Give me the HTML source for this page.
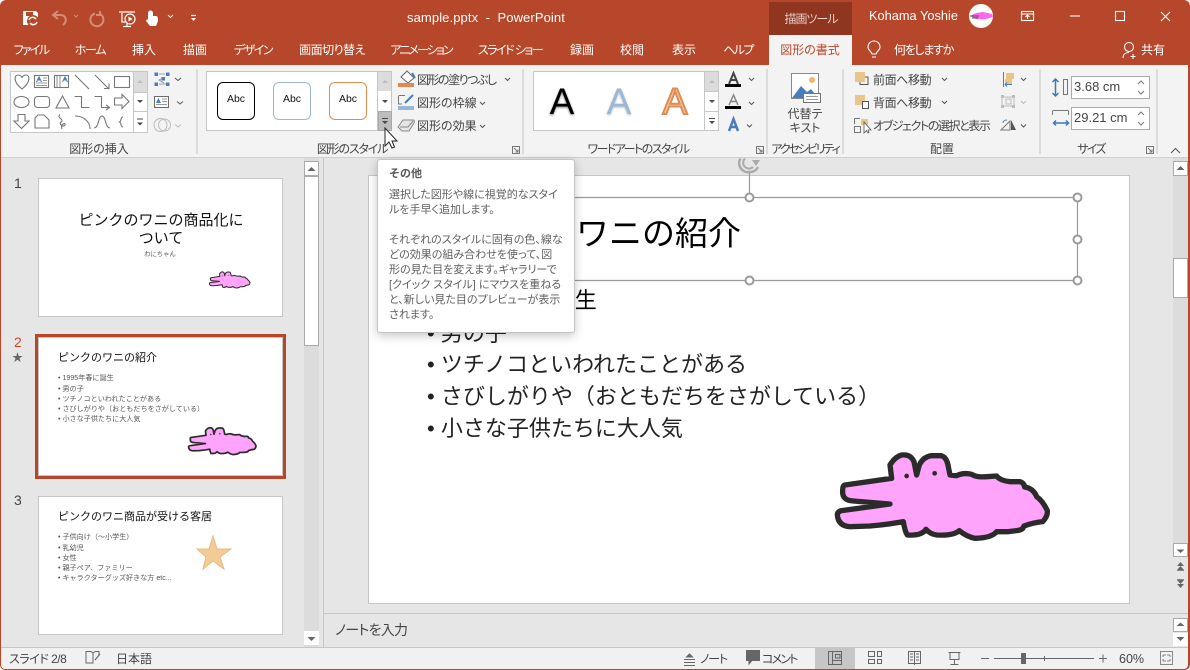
<!DOCTYPE html>
<html lang="ja"><head><meta charset="utf-8"><title>sample.pptx - PowerPoint</title>
<style>
*{box-sizing:border-box}
html,body{margin:0;padding:0;width:1190px;height:670px;overflow:hidden;background:#fff}
body{font-family:"Liberation Sans","Noto Sans CJK JP",sans-serif;position:relative}
div{position:absolute}
.t{white-space:nowrap;height:20px;line-height:20px;font-size:12px;color:#444;font-feature-settings:"palt"}
.c{transform:translateX(-50%)}
.w{color:#fff}
.s{font-feature-settings:normal;color:#000;white-space:nowrap}
svg{position:absolute;left:0;top:0}
.b{background:#fff;border:1px solid #c6c6c6}
.g{background:#dcdcdc}
.m{font-size:7.1px;line-height:10px;height:10px;color:#555;white-space:nowrap}
</style></head><body>
<div style="left:0;top:0;width:1190px;height:670px;background:#B7472A;border-radius:6px 6px 5px 5px"></div>
<div style="left:769px;top:2px;width:83px;height:33px;background:#8F3520"></div>
<div style="left:769px;top:35px;width:83px;height:30px;background:#F3F3F3"></div>
<div style="left:1px;top:65px;width:1187px;height:92px;background:#F3F3F3"></div>
<div style="left:1px;top:157px;width:1187px;height:490px;background:#E6E6E6;border-top:1px solid #d0d0d0"></div>
<div style="left:1px;top:647px;width:1187px;height:22px;background:#F1F1F1;border-top:1px solid #c6c6c6;border-radius:0 0 4px 4px"></div>

<!-- title bar text -->
<div class="t w" style="left:407px;top:8px;font-size:13px;letter-spacing:.1px">sample.pptx&nbsp; - &nbsp;PowerPoint</div>
<div class="t c" style="left:811px;top:9px;color:#e8cfc8;letter-spacing:-1px">描画ツール</div>
<div class="t w" style="left:869px;top:6px;font-size:12.8px">Kohama Yoshie</div>
<div class="t w c" style="left:31px;top:40px;letter-spacing:-1.7px">ファイル</div>
<div class="t w c" style="left:90px;top:40px;letter-spacing:-1.3px">ホーム</div>
<div class="t w c" style="left:144px;top:40px">挿入</div>
<div class="t w c" style="left:195px;top:40px">描画</div>
<div class="t w c" style="left:253px;top:40px;letter-spacing:-1.5px">デザイン</div>
<div class="t w c" style="left:332px;top:40px;letter-spacing:-.5px">画面切り替え</div>
<div class="t w c" style="left:421px;top:40px;letter-spacing:-1.9px">アニメーション</div>
<div class="t w c" style="left:510px;top:40px;letter-spacing:-1.5px">スライド ショー</div>
<div class="t w c" style="left:582px;top:40px">録画</div>
<div class="t w c" style="left:632px;top:40px">校閲</div>
<div class="t w c" style="left:684px;top:40px">表示</div>
<div class="t w c" style="left:738px;top:40px;letter-spacing:-1.7px">ヘルプ</div>
<div class="t c" style="left:810px;top:40px;color:#B7472A">図形の書式</div>
<div class="t w" style="left:894px;top:40px;letter-spacing:-1.3px">何をしますか</div>
<div class="t w" style="left:1141px;top:40px">共有</div>

<!-- ribbon boxes -->
<div class="b" style="left:10px;top:71px;width:138px;height:62px"></div>
<div class="g" style="left:134px;top:72px;width:13px;height:20px"></div>
<div style="left:133px;top:72px;width:1px;height:60px;background:#c6c6c6"></div>
<div style="left:134px;top:92px;width:13px;height:1px;background:#c6c6c6"></div>
<div style="left:134px;top:111px;width:13px;height:1px;background:#c6c6c6"></div>

<div class="b" style="left:206px;top:71px;width:186px;height:60px"></div>
<div class="g" style="left:378px;top:72px;width:13px;height:19px"></div>
<div style="left:377px;top:72px;width:1px;height:58px;background:#c6c6c6"></div>
<div style="left:378px;top:111px;width:14px;height:20px;background:#bdbdbd;border:1px solid #a8a8a8"></div>
<div style="left:217px;top:82px;width:38px;height:38px;border:1px solid #000;border-radius:6px;background:#fff"></div>
<div style="left:273px;top:82px;width:38px;height:38px;border:1px solid #9ab8d6;border-radius:6px;background:#fff"></div>
<div style="left:329px;top:82px;width:38px;height:38px;border:1px solid #e08b50;border-radius:6px;background:#fff"></div>
<div class="t c" style="left:236px;top:89px;font-size:10.5px;color:#111">Abc</div>
<div class="t c" style="left:292px;top:89px;font-size:10.5px;color:#111">Abc</div>
<div class="t c" style="left:348px;top:89px;font-size:10.5px;color:#111">Abc</div>

<div class="b" style="left:533px;top:71px;width:186px;height:60px"></div>
<div class="g" style="left:705px;top:72px;width:13px;height:19px"></div>
<div style="left:704px;top:72px;width:1px;height:58px;background:#c6c6c6"></div>
<div style="left:705px;top:91px;width:13px;height:1px;background:#c6c6c6"></div>
<div style="left:705px;top:111px;width:13px;height:1px;background:#c6c6c6"></div>
<div class="s c" style="left:562px;top:81px;font-size:37px;line-height:42px;text-shadow:0 1px 2px #777">A</div>
<div class="s c" style="left:619px;top:81px;font-size:37px;line-height:42px;color:#9ab8d6;text-shadow:0 1px 2px #bbb">A</div>
<div class="s c" style="left:675px;top:81px;font-size:37px;line-height:42px;color:#f2c8b0;-webkit-text-stroke:2px #e08b50">A</div>

<div class="t" style="left:417px;top:70px;letter-spacing:-1.5px">図形の塗りつぶし</div>
<div class="t" style="left:417px;top:93px">図形の枠線</div>
<div class="t" style="left:417px;top:116px">図形の効果</div>
<div class="t c" style="left:805px;top:104px">代替テ</div>
<div class="t c" style="left:805px;top:118px">キスト</div>
<div class="t" style="left:873px;top:70px;letter-spacing:-.4px">前面へ移動</div>
<div class="t" style="left:873px;top:93px;letter-spacing:-.4px">背面へ移動</div>
<div class="t" style="left:873px;top:116px;letter-spacing:-1.4px">オブジェクトの選択と表示</div>
<div class="b" style="left:1071px;top:76px;width:79px;height:23px;border-color:#aaa"></div>
<div class="b" style="left:1071px;top:107px;width:79px;height:23px;border-color:#aaa"></div>
<div class="t" style="left:1074px;top:77px;font-size:13px;font-feature-settings:normal">3.68 cm</div>
<div class="t" style="left:1074px;top:108px;font-size:13px;font-feature-settings:normal">29.21 cm</div>

<div class="t c" style="left:99px;top:139px">図形の挿入</div>
<div class="t c" style="left:352px;top:139px;letter-spacing:-1.2px">図形のスタイル</div>
<div class="t c" style="left:638px;top:139px;letter-spacing:-1.55px">ワードアートのスタイル</div>
<div class="t c" style="left:805px;top:139px;letter-spacing:-2.1px">アクセシビリティ</div>
<div class="t c" style="left:942px;top:139px">配置</div>
<div class="t c" style="left:1091px;top:139px;letter-spacing:-1.7px">サイズ</div>

<!-- left panel -->
<div style="left:304px;top:158px;width:15px;height:489px;background:#dcdcdc"></div>
<div class="b" style="left:304px;top:161px;width:15px;height:15px;border-color:#aaa"></div>
<div class="b" style="left:304px;top:176px;width:15px;height:170px;border-color:#aaa"></div>
<div class="b" style="left:304px;top:631px;width:15px;height:14px;border-color:#fff"></div>
<div style="left:323px;top:158px;width:1px;height:489px;background:#c6c6c6"></div>
<div class="t" style="left:14px;top:173px;font-size:14px;color:#444">1</div>
<div class="t" style="left:14px;top:332px;font-size:14px;color:#C8472A">2</div>
<div class="t" style="left:14px;top:490px;font-size:14px;color:#444">3</div>
<div class="t" style="left:12px;top:348px;font-size:11px;color:#666;font-feature-settings:normal">★</div>

<div class="b" style="left:38px;top:178px;width:245px;height:139px"></div>
<div class="s c" style="left:161px;top:212px;font-size:15px;line-height:18px;text-align:center;color:#111">ピンクのワニの商品化に<br>ついて</div>
<div class="m c" style="left:160px;top:250px;font-size:6.3px">わにちゃん</div>

<div style="left:35px;top:334px;width:251px;height:145px;background:#fff;border:3px solid #B7472A"></div>
<div style="left:38px;top:337px;width:245px;height:139px;border:1px solid #c6c6c6"></div>
<div class="s" style="left:58px;top:349px;font-size:11px;line-height:18px;color:#111">ピンクのワニの紹介</div>
<div class="m" style="left:58px;top:373px">• 1995年春に誕生</div>
<div class="m" style="left:58px;top:384px">• 男の子</div>
<div class="m" style="left:58px;top:394px">• ツチノコといわれたことがある</div>
<div class="m" style="left:58px;top:404px">• さびしがりや（おともだちをさがしている）</div>
<div class="m" style="left:58px;top:414px">• 小さな子供たちに大人気</div>

<div class="b" style="left:38px;top:496px;width:245px;height:139px"></div>
<div class="s" style="left:58px;top:508px;font-size:11px;line-height:18px;color:#111">ピンクのワニ商品が受ける客居</div>
<div class="m" style="left:58px;top:532px">• 子供向け（～小学生）</div>
<div class="m" style="left:58px;top:543px">• 乳幼児</div>
<div class="m" style="left:58px;top:553px">• 女性</div>
<div class="m" style="left:58px;top:563px">• 親子ペア、ファミリー</div>
<div class="m" style="left:58px;top:573px">• キャラクターグッズ好きな方 etc...</div>

<!-- slide -->
<div style="left:368px;top:175px;width:762px;height:429px;background:#fff;border:1px solid #c6c6c6"></div>
<div class="s" style="left:444px;top:210px;font-size:33px;line-height:48px">ピンクのワニの紹介</div>
<div class="s" style="left:427px;top:285px;font-size:22px;line-height:32px;letter-spacing:-.3px">•&nbsp;1995年春に誕生</div>
<div class="s" style="left:427px;top:318px;font-size:22px;line-height:32px;color:#222">•&nbsp;男の子</div>
<div class="s" style="left:427px;top:349px;font-size:22px;line-height:32px;color:#222">•&nbsp;ツチノコといわれたことがある</div>
<div class="s" style="left:427px;top:381px;font-size:22px;line-height:32px;color:#222">•&nbsp;さびしがりや（おともだちをさがしている）</div>
<div class="s" style="left:427px;top:413px;font-size:22px;line-height:32px;color:#222">•&nbsp;小さな子供たちに大人気</div>

<!-- right scroll & notes -->
<div style="left:1173px;top:158px;width:15px;height:398px;background:#dcdcdc"></div>
<div class="b" style="left:1173px;top:161px;width:15px;height:15px;border-color:#aaa"></div>
<div class="b" style="left:1173px;top:258px;width:15px;height:40px;border-color:#aaa"></div>
<div class="b" style="left:1173px;top:543px;width:15px;height:14px;border-color:#aaa"></div>
<div style="left:324px;top:613px;width:864px;height:1px;background:#c6c6c6"></div>
<div class="t" style="left:335px;top:620px;font-size:14px;color:#444;letter-spacing:-.7px">ノートを入力</div>
<div class="b" style="left:1173px;top:618px;width:15px;height:14px;border-color:#aaa"></div>
<div class="b" style="left:1173px;top:633px;width:15px;height:13px;border-color:#fff"></div>

<!-- status -->
<div style="left:815px;top:648px;width:40px;height:21px;background:#c6c6c6"></div>
<div class="t" style="left:9px;top:649px;font-size:12px;letter-spacing:-.5px">スライド 2/8</div>
<div class="t" style="left:116px;top:649px;font-size:12px">日本語</div>
<div class="t" style="left:700px;top:649px;font-size:12px;letter-spacing:-1.2px">ノート</div>
<div class="t" style="left:762px;top:649px;font-size:12px;letter-spacing:-1.8px">コメント</div>
<div class="t" style="left:1119px;top:649px;font-size:12.5px;font-feature-settings:normal">60%</div>

<!-- icons -->
<svg width="1190" height="670" viewBox="0 0 1190 670" fill="none">
<defs>
<g id="croc">
<path d="M75 135L215 115L210 75Q225 50 245 45Q272 42 282 65L290 105L298 75Q310 50 335 47L362 47Q380 50 385 80L390 105L410 107Q430 97 455 103Q470 113 500 110L530 108Q540 122 570 125L600 125Q612 128 614 141Q640 145 650 170Q668 182 682 212Q684 228 668 245Q640 248 612 258Q610 270 590 272L565 275L530 275Q515 294 465 295Q440 290 418 272Q400 288 350 285Q330 282 318 268Q305 288 262 285Q255 275 250 245Q200 254 150 258L90 260Q55 258 52 225Q52 215 65 212L210 192L100 183Q65 182 68 150Q68 137 75 135Z" fill="#FFA3FB" stroke="#2b2b2b" stroke-width="16" stroke-linejoin="round"/>
<circle cx="260" cy="108" r="7" fill="#2b2b2b"/><circle cx="344" cy="100" r="7" fill="#2b2b2b"/>
</g>
</defs>
<!-- crocs -->
<use href="#croc" transform="translate(820 440) scale(.3333)"/>
<use href="#croc" transform="translate(183 423) scale(.107)"/>
<use href="#croc" transform="translate(206 269) scale(.0645)"/>
<!-- star thumb3 -->
<path d="M213 536L217 549L231 549L220 557L224 569L213 561L203 569L206 557L197 549L209 549Z" fill="#F3CB94" stroke="#e6bb80"/>
<!-- QAT -->
<path d="M23 11H36L38 13V19H33V25H23Z" fill="#fff"/><rect x="26" y="12" width="7" height="4" fill="#B7472A"/>
<circle cx="33" cy="21" r="6" fill="#B7472A"/>
<g stroke="#fff" fill="none" stroke-width="1.500">
<path d="M29 20a4 4 0 0 1 7-1M37 22a4 4 0 0 1-7 1"/>
<path d="M119 12H135M122 13V22H127M127 22V26M123 26.500H131" stroke-width="1.200"/>
<circle cx="130" cy="19" r="5" fill="#B7472A" stroke-width="1.200"/>
<path d="M168 15L170.500 17.500L173 15" stroke-width="1"/>
<path d="M191 15.500H196" stroke-width="1.200"/>
</g>
<path d="M128.500 16.500L132.500 19L128.500 21.500Z" fill="#fff"/>
<path d="M148 13a2.500 2.500 0 0 1 5 0V16H156C158 16 158 19 158 21L156 26H150L146 21L147 19L148 20Z" fill="#fff"/>
<path d="M191 18H196L193.500 21Z" fill="#fff"/>
<g stroke="#D58D78" fill="none" stroke-width="2">
<path d="M63 25C68 21 66 15 60 15H54M58 11L53 15L58 19"/>
<path d="M95 13.500a6.500 6.500 0 1 0 5 .5M100 11V15H96"/>
<path d="M74 15L76 17L78 15" stroke-width="1"/>
</g>
<!-- win controls -->
<g stroke="#fff" stroke-width="1.100">
<rect x="1021.500" y="11.500" width="12" height="9"/><path d="M1021.500 14H1033.500M1027.500 19V15.500M1025.500 17L1027.500 15L1029.500 17"/>
<path d="M1070 16H1080"/><rect x="1115.500" y="11.500" width="9" height="9"/>
<path d="M1161 12L1170 21M1170 12L1161 21"/>
</g>
<!-- avatar -->
<circle cx="981" cy="16" r="12" fill="#fff"/>
<path d="M970 16L976 13L983 12L992 14L993 17L986 19L976 19Z" fill="#FF66EE"/>
<path d="M970 16H979M972 18H978" stroke="#333" stroke-width=".8"/>
<!-- bulb, share -->
<g stroke="#fff" stroke-width="1.100">
<path d="M872 54C871 51 868 50 868 47A6 6 0 0 1 880 47C880 50 877 51 876 54ZM872 57H876"/>
<circle cx="1129" cy="47" r="4.500"/><path d="M1123 58C1123 54 1126 52.500 1129 52.500M1133 54V59M1130.500 56.500H1135.500"/>
</g>
<!-- group separators -->
<g stroke="#c6c6c6"><path d="M197 69V154M523 69V154M767 69V154M843 69V154M1040 69V154M1157 69V154"/></g>
<!-- dialog launchers -->
<g stroke="#777" stroke-width="1"><path d="M512.500 146.500H519.500V153.500H512.500ZM514 148L518 152M518 149.500V152H515.500"/><path d="M756.500 146.500H763.500V153.500H756.500ZM758 148L762 152M762 149.500V152H759.500"/><path d="M1146.500 146.500H1153.500V153.500H1146.500ZM1148 148L1152 152M1152 149.500V152H1149.500"/><path d="M1171 153L1175.500 148.500L1180 153" stroke="#555"/></g>
<!-- shapes gallery -->
<g stroke="#777" stroke-width="1.100" fill="none">
<path d="M22 89C13 82 14 75 18 75C20 75 22 76.500 22 78C22 76.500 24 75 26 75C30 75 31 82 22 89Z"/>
<rect x="34.500" y="75.500" width="14" height="12"/>
<rect x="54.500" y="75.500" width="14" height="12"/>
<path d="M43 78H47M43 80.500H47M36 83H47M36 85.500H47M57 76V87M60 76V87" stroke-width=".8"/>
<path d="M75 75L89 89M95 75L109 89M104 88.500H109V83.500"/>
<rect x="114.500" y="76.500" width="15" height="11"/>
<ellipse cx="21.500" cy="102" rx="7.500" ry="5.500"/>
<rect x="34.500" y="96.500" width="15" height="11" rx="3"/>
<path d="M62.500 96L56 108H69Z"/>
<path d="M74.500 96.500H81.500V107.500H89.500"/>
<path d="M94.500 96.500H101.500V107.500H109M106 105L109.500 107.500L106 110"/>
<path d="M114.500 98H122V94.500L129 101.500L122 108.500V105H114.500Z"/>
<path d="M18 114.500H25V121H29L21.500 128.500L14 121H18Z"/>
<path d="M38 115H44L49 120V128H35V118Z"/>
<path d="M60 114.500C56 118 65 119 61 122C58 124 64 128 65 125C66 122 60 124 62 129"/>
<path d="M75 116C84 116 90 122 90 129"/>
<path d="M94 128C99 128 98 116 102 116C106 116 105 128 110 128"/>
<path d="M123 117C120 117 122 121 119.500 122C122 123 120 127 123 127"/>
</g>
<g fill="#4a4a4a"><path d="M137 100H143L140 103Z"/><path d="M137 122.500H143L140 125.500Z"/><path d="M137 118.500H143V119.500H137Z"/></g>
<path d="M137 83L140 80L143 83Z" fill="#bcbcbc"/>
<path d="M36 82L38.500 76.500H39.500L42 82H40.800L40.300 80.500H37.700L37.200 82Z M62 82L64.500 76.500H65.500L68 82H66.800L66.300 80.500H63.700L63.200 82Z" fill="#4a7ebb"/>
<path d="M154.500 72.500h3.500v3.500h-3.500zM166 72.500h3.500v3.500h-3.500zM154.500 82.500h3.500v3.500h-3.500zM166 82.500h3.500v3.500h-3.500zM161.500 77h3.500v3.500h-3.500z" fill="#4a7ebb"/>
<path d="M159 84H166M159 74H165M163 78L159 80L164 83" stroke="#888" stroke-width=".8"/>
<rect x="154.500" y="96.500" width="14" height="11" fill="#fff" stroke="#6b6b6b"/>
<path d="M162 99H167M162 101.500H167M156 104.500H167" stroke="#777" stroke-width=".8"/><path d="M156 103L158.500 98L161 103Z" fill="#4a7ebb"/>
<circle cx="160.500" cy="125" r="6.500" stroke="#bbb"/><circle cx="164.500" cy="125" r="6" stroke="#bbb"/>
<g stroke="#555" stroke-width="1"><path d="M175 78L178 80.500L181 78M177 101.500L180 104L183 101.500"/><path d="M175 124.500L178 127L181 124.500" stroke="#bbb"/>
<path d="M505 78L507.500 80.500L510 78M480 102L482.500 104.500L485 102M480 125L482.500 127.500L485 125"/>
<path d="M749 78L751.500 80.500L754 78M749 102L751.500 104.500L754 102M747 124.500L749.500 127L752 124.500"/>
<path d="M942 78L944.500 80.500L947 78M942 101L944.500 103.500L947 101"/>
<path d="M1021 78L1023.500 80.500L1026 78M1021 124.500L1023.500 127L1026 124.500"/><path d="M1021 101L1023.500 103.500L1026 101" stroke="#bbb"/></g>
<!-- gallery scroll arrows -->
<path d="M382 83L385 80L388 83Z M709 83L712 80L715 83Z" fill="#bcbcbc"/>
<path d="M382 100H388L385 103Z M709 100H715L712 103Z M382 121H388L385 124Z M382 118H388V119H382Z M709 121H715L712 124Z M709 118H715V119H709Z" fill="#4a4a4a"/>
<!-- cursor -->
<path d="M385 128V146L389 142L392 148L394.500 147L392 141H397Z" fill="#fff" stroke="#222" stroke-width="1"/>
<!-- fill icons -->
<path d="M401 77L407 71L414 78L408 83Z" fill="#fff" stroke="#666"/><path d="M412 73L415 78" stroke="#4a7ebb" stroke-width="2"/><rect x="398" y="83" width="16" height="4" fill="#E0894F"/>
<rect x="398" y="106" width="16" height="4" fill="#9AB8D6"/><path d="M398.500 96V104H402M398.500 95.500H405" stroke="#777"/><path d="M413 95L405 103" stroke="#4a7ebb" stroke-width="2"/>
<path d="M398 127L403 120H413Q415 120 414 123L409 131H402Z" fill="#e6e6e6" stroke="#888"/><path d="M400 127H408L413 121" stroke="#888"/>
<!-- wordart side -->
<path d="M729 84L733.500 73L738 84M731 80H736" stroke="#444" stroke-width="2"/><rect x="725" y="84" width="16" height="3" fill="#000"/>
<path d="M729 105L733.500 95L738 105M731 101.500H736" stroke="#888" stroke-width="1.500"/><rect x="725" y="106" width="16" height="3" fill="#000"/>
<path d="M729 131L733.500 119L738 131M730.500 127H736.500" stroke="#4a7ebb" stroke-width="2.500"/>
<!-- alt text -->
<rect x="791.500" y="73.500" width="27" height="25" fill="#fff" stroke="#888"/>
<circle cx="812" cy="80" r="3" fill="#EFB666"/>
<path d="M792 98L801 86L807 92L811 89L818 98Z" fill="#4a7ebb"/>
<rect x="803.500" y="93.500" width="17" height="9" fill="#fff" stroke="#777"/><path d="M806 96.500H818M806 99.500H818" stroke="#999"/>
<!-- arrange -->
<rect x="855" y="72" width="10" height="10" fill="#EBC585"/><path d="M865 84.500H868V77H865M860 84.500H865M860 82V85" stroke="#555" fill="none"/>
<rect x="855" y="95" width="10" height="10" fill="#EBC585"/><rect x="862.500" y="101.500" width="6" height="7" fill="#fff" stroke="#555"/>
<path d="M854.500 118.500H860M854.500 118.500V124M854.500 126.500H860.500V132.500H854.500Z" stroke="#777"/><rect x="861" y="119" width="7" height="6" fill="#EBC585"/><path d="M864 122V133L866.500 130.500L868 133L869 132.500L868 130H871Z" fill="#fff" stroke="#555" stroke-width=".8"/>
<!-- align group -->
<path d="M1003.500 72V87" stroke="#777"/><rect x="1006" y="73" width="8" height="6" fill="#EBC585"/><rect x="1005" y="79" width="7" height="5" fill="#EBC585"/><path d="M1005 84.500H1012M1007 82.500L1005 84.500L1007 86.500" stroke="#4a7ebb"/>
<g fill="#bbb"><rect x="1001" y="95" width="3" height="3"/><rect x="1012" y="95" width="3" height="3"/><rect x="1001" y="105" width="3" height="3"/><rect x="1012" y="105" width="3" height="3"/></g><path d="M1004 97H1012M1004 106H1012M1002 98V105M1014 98V105M1006 99H1011V104H1006Z" stroke="#bbb"/>
<path d="M1001 130L1010 121V130Z" stroke="#777"/><path d="M1011 120L1016 130H1011Z" fill="#555"/><path d="M1003 123C1003 121 1005 120 1007 120" stroke="#4a7ebb"/>
<!-- size -->
<path d="M1055.500 80V95M1052.500 82L1055.500 79L1058.500 82M1052.500 93L1055.500 96L1058.500 93" stroke="#3f78b3" stroke-width="1.500"/><rect x="1063.500" y="79.500" width="4" height="15" stroke="#777"/>
<path d="M1052.500 110.500H1068.500M1052.500 111V115M1068.500 111V115" stroke="#777"/><path d="M1054 123H1068M1056 120.500L1053.500 123L1056 125.500M1066 120.500L1068.500 123L1066 125.500" stroke="#3f78b3" stroke-width="1.500"/>
<g stroke="#777"><path d="M1138 84L1141 81L1144 84M1138 91L1141 94L1144 91M1138 115L1141 112L1144 115M1138 122L1141 125L1144 122"/></g>
<!-- scroll arrows -->
<path d="M307.500 171L311.500 167L315.500 171Z M1176.500 170L1180.500 166L1184.500 170Z M1176.500 549.500H1184.500L1180.500 553Z M307.500 637H315.500L311.500 641Z M1176.500 626L1180.500 622.500L1184.500 626Z M1176.500 637H1184.500L1180.500 641Z" fill="#666"/>
<path d="M1177 566L1180.500 562L1184 566ZM1177 570L1180.500 566L1184 570ZM1177 580H1184L1180.500 584ZM1177 584H1184L1180.500 588Z" fill="#666"/>
<path d="M1177 570.500H1184M1177 579.500H1184" stroke="#666" stroke-width=".8"/>
<!-- selection -->
<g stroke="#9a9a9a" stroke-width="1.200">
<path d="M574 197.500H1077.500V280.500H574M749.500 197V173"/>
<path d="M740.500 158.500A9 9 0 0 0 750 172A9 9 0 0 0 758 167" stroke="#aaa" stroke-width="2.500"/>
<path d="M745 158.500A5 5 0 0 0 753 167" stroke="#aaa" stroke-width="2"/>
<path d="M752 160L760 160L756 166Z" fill="#aaa" stroke="none"/>
<g fill="#fff" stroke-width="2"><circle cx="749.500" cy="197.500" r="4"/><circle cx="1077.500" cy="197.500" r="4"/><circle cx="1077.500" cy="239.500" r="4"/><circle cx="749.500" cy="280.500" r="4"/><circle cx="1077.500" cy="280.500" r="4"/></g>
</g>
<!-- status icons -->
<g stroke="#666" stroke-width="1">
<path d="M86 651.500H91L93 653V663H86ZM93 653L95 651.500H99V655M93 653V663"/>
<path d="M95 660L100 654" stroke-width="1.200"/>
<path d="M684 659.500H695M684 662.500H695M684 665.500H695"/><path d="M686.500 657L689.500 654L692.500 657Z" fill="#666"/>
<path d="M746.500 650.500H759.500V660.500H752L749 664V660.500H746.500Z" fill="#666"/>
<path d="M828.500 651.500H841.500V664.500H828.500ZM832.500 651.500V664.500M835.500 654.500H840V658H835.500ZM832.500 660.500H841.500"/>
<path d="M868.500 651.500H874.500V656.500H868.500ZM877.500 651.500H881.500V656.500H877.500ZM868.500 659.500H874.500V663.500H868.500ZM877.500 659.500H881.500V663.500H877.500Z"/>
<path d="M908.500 651.500H920.500V663.500H908.500ZM914.500 651.500V665M910 654H913M910 657H913M910 660H913M916 654H919M916 657H919M916 660H919"/>
<path d="M948.500 652.500H960.500M950 652.500V659.500H959V652.500M954.500 659.500V664M950.500 664.500H958.500"/>
<path d="M981 658.500H989M994 658.500H1094M1044.500 656V661M1099 658.500H1107M1103 654.500V662.500"/>
<path d="M1160.500 651.500H1172.500V664.500H1160.500Z" stroke="#888"/><path d="M1163 655H1166M1163 655V657M1170 655H1167M1170 655V657M1163 661H1166M1163 661V659M1170 661H1167M1170 661V659" stroke-width=".8"/>
</g>
<rect x="1021" y="653" width="5" height="11" fill="#666"/>
</svg>

<!-- tooltip -->
<div style="left:377px;top:159px;width:198px;height:174px;background:#fff;border:1px solid #c4c4c4;border-radius:3px;box-shadow:0 3px 10px rgba(0,0,0,.22)"></div>
<div class="t" style="left:389px;top:164px;font-size:11px;font-weight:bold;color:#5a5a5a;font-feature-settings:normal">その他</div>
<div class="s" style="left:389px;top:188px;font-size:11px;line-height:15px;color:#5f5f5f;font-feature-settings:&quot;palt&quot;">選択した図形や線に視覚的なスタイ<br>ルを手早く追加します。<br><br>それぞれのスタイルに固有の色、線な<br>どの効果の組み合わせを使って、図<br>形の見た目を変えます。ギャラリーで<br>[クイック スタイル] にマウスを重ねる<br>と、新しい見た目のプレビューが表示<br>されます。</div>
</body></html>
